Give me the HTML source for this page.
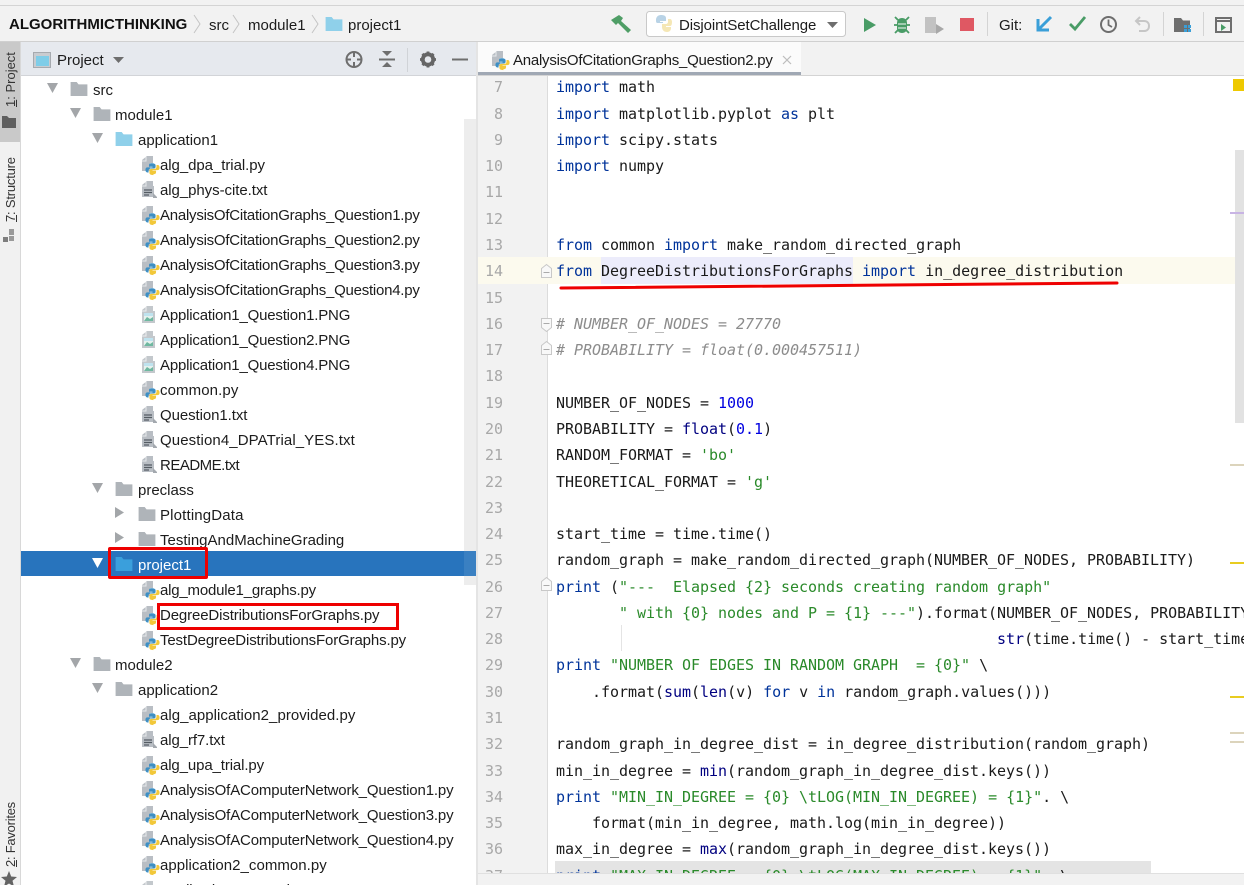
<!DOCTYPE html>
<html><head><meta charset="utf-8"><style>
html,body{margin:0;padding:0;background:#fff}
#p{position:relative;width:1244px;height:885px;overflow:hidden;background:#fff;font-family:"Liberation Sans",sans-serif;color:#1c1c1c}
.a{position:absolute}
.t{position:absolute;font-size:15px;line-height:20px;white-space:pre;height:20px;margin-top:2px}
.c{position:absolute;left:556px;font-family:"DejaVu Sans Mono",monospace;font-size:15px;line-height:20px;white-space:pre;letter-spacing:-.03px;color:#1a1a1a}
.n{position:absolute;left:480px;width:23px;text-align:right;font-family:"DejaVu Sans Mono",monospace;font-size:15px;line-height:20px;color:#a8a8a8}
.k{color:#00339a}.s{color:#2a8a2a}.d{color:#0000e0}.b{color:#000080}.m{color:#8c8c8c;font-style:italic}
svg{position:absolute;overflow:visible}
.v{position:absolute;font-size:13px;line-height:18px;white-space:pre;transform-origin:0 0;transform:rotate(-90deg);color:#333}
.q{letter-spacing:-.24px}.r{letter-spacing:-.15px}.w{letter-spacing:-.19px}
</style></head><body><div id="p">
<svg width="0" height="0" style="left:0;top:0"><defs>
<symbol id="py" viewBox="0 0 18 20" overflow="visible"><path d="M1 5l5-4h6v7H9v8H1z" fill="#b9bec4"/><path d="M5 2v4H1" fill="none" stroke="#e8eaec" stroke-width="1"/><g transform="translate(1.400 1.600) scale(.88)"><path d="M10.500 7.500c-2.500 0-3 1-3 2.500v1.500h4v.7H5.700C4 12.200 3.500 13.500 3.500 15s.5 3 2.200 3H7v-2c0-1.500 1-2.500 2.500-2.500H13c1.300 0 2-.8 2-2V10c0-1.500-1.500-2.500-4.500-2.500z" fill="#3d8fc4"/><path d="M12.500 20c2.500 0 3-1 3-2.500V16h-4v-.7h5.800c1.700 0 2.200-1.300 2.200-2.800s-.5-3-2.200-3H16v2c0 1.500-1 2.500-2.500 2.500H10c-1.300 0-2 .8-2 2v2.500c0 1.500 1.500 2.500 4.500 2.500z" fill="#f2c83a"/></g></symbol>
<symbol id="tx" viewBox="0 0 18 20" overflow="visible"><path d="M1 5l5-4h6v5h1v11H1z" fill="#b9bec4"/><path d="M5 2v4H1" fill="none" stroke="#e8eaec"/><path d="M3 10h8M3 12.500h8M3 15h5" stroke="#555c63" stroke-width="1.300"/><path d="M12 13l4 4v1h-4z" fill="#a4a9af"/></symbol>
<symbol id="pn" viewBox="0 0 18 20" overflow="visible"><path d="M1 5l5-4h6v5h2v12H1z" fill="#c3c8cc"/><path d="M5 2v4H1" fill="none" stroke="#eceeef"/><rect x="3" y="8" width="9" height="8" fill="#e6f2ee"/><path d="M3 16l3-4 3 2 3-2v4z" fill="#6fb8a0"/><rect x="3" y="8" width="9" height="3" fill="#bfe3ef"/></symbol>
<symbol id="fo" viewBox="0 0 18 15" overflow="visible"><path d="M0 0h6.500l2 2.500H18V15H0z"/></symbol>
</defs></svg>

<!-- top bars -->
<div class="a" style="left:0;top:0;width:1244px;height:41px;background:#f2f2f2"></div>
<div class="a" style="left:0;top:5px;width:1244px;height:1px;background:#d4d4d4"></div>
<div class="a" style="left:0;top:41px;width:1244px;height:1px;background:#d0d0d0"></div>
<div class="t" style="left:9px;top:13px;font-weight:bold;color:#111">ALGORITHMICTHINKING</div>
<svg style="left:0;top:0" width="400" height="41"><path d="M194 15l6 9-6 9M233 15l6 9-6 9M312 15l6 9-6 9" fill="none" stroke="#c4c4c4" stroke-width="1"/><use href="#fo" x="325" y="17" width="18" height="14" fill="#8fd0ea"/></svg>
<div class="t" style="left:209px;top:14px">src</div>
<div class="t" style="left:248px;top:14px">module1</div>
<div class="t" style="left:348px;top:14px">project1</div>

<!-- toolbar -->
<svg style="left:0;top:0" width="1244" height="41">
<path d="M611 20l8-5 4 3-2 3 10 9-3 3-10-10-2 2z" fill="#4f9e66"/>
<rect x="646.500" y="11.500" width="199" height="25" rx="3" fill="#fff" stroke="#c9c9c9"/>
<path d="M656 20c0-3 2-5 5-5s5 1 5 3v3h-6v1h3v1h-5c-2 0-2-1-2-3z" fill="#b9d3e6"/>
<path d="M672 22c0-2-1-3-2-3h-2v3c0 1-1 2-2 2h-4v3c0 3 2 5 5 5s4-2 4-4v-1h-5v-1h4c2 0 2-3 2-5z" fill="#f5e7b5"/>
<path d="M827 22h11l-5.500 6z" fill="#6e6e6e"/>
<path d="M864 18l12 7-12 7z" fill="#499c66"/>
<path d="M897 23c0-3 2-5 5-5s5 2 5 5v5c0 3-2 5-5 5s-5-2-5-5z" fill="#499c66"/><path d="M895 17l3 3M909 17l-3 3M894 25h3M907 25h3M895 33l3-3M909 33l-3-3" stroke="#499c66" stroke-width="1.800"/><path d="M898 24h8M898 28h8" stroke="#d5e9dc" stroke-width="1.300"/>
<path d="M925 17h11v16h-11z" fill="#c2c2c2"/><path d="M936 24l8 5-8 5z" fill="#a8a8a8"/>
<rect x="960" y="18" width="14" height="13" fill="#df5863"/>
<rect x="987" y="12" width="1" height="24" fill="#d4d4d4"/>
<path d="M1038 19v11h11M1039 29l12-12" fill="none" stroke="#3a9fd8" stroke-width="3"/>
<path d="M1070 24l5 5 10-12" fill="none" stroke="#499c66" stroke-width="2.800"/>
<circle cx="1108.500" cy="24.500" r="7.500" fill="none" stroke="#6e6e6e" stroke-width="2"/><path d="M1108.500 19.500v5.500l3.500 2" fill="none" stroke="#6e6e6e" stroke-width="1.800"/>
<path d="M1140 17l-4 4 4 4M1136 21h8c3 0 5 2 5 5s-2 5-5 5h-5" fill="none" stroke="#c6c6c6" stroke-width="2"/>
<rect x="1163" y="12" width="1" height="24" fill="#d4d4d4"/>
<path d="M1174 18h7l2 2.500h7V32h-16z" fill="#6e6e6e"/><g fill="#3a9fd8"><rect x="1184" y="25" width="3" height="3"/><rect x="1188" y="25" width="3" height="3"/><rect x="1184" y="29" width="3" height="3"/><rect x="1188" y="29" width="3" height="3"/></g>
<rect x="1203" y="12" width="1" height="24" fill="#d4d4d4"/>
<rect x="1216" y="18" width="15" height="14" fill="#f2f2f2" stroke="#6e6e6e" stroke-width="2"/><path d="M1216 21h15" stroke="#6e6e6e" stroke-width="2"/><path d="M1221 24l5 3.500-5 3.500z" fill="#499c66"/>
</svg>
<div class="t" style="left:679px;top:14px;letter-spacing:-.1px">DisjointSetChallenge</div>
<div class="t" style="left:999px;top:14px">Git:</div>

<!-- left stripe -->
<div class="a" style="left:0;top:42px;width:20px;height:843px;background:#f1f1f1;border-right:1px solid #d8d8d8"></div>
<div class="a" style="left:0;top:42px;width:20px;height:100px;background:#c9c9c9"></div>
<div class="v" style="left:2px;top:107px"><u>1</u>: Project</div>
<svg style="left:0;top:0" width="21" height="885"><path d="M2 116h5l2 2h7v10H2z" fill="#5e5e5e"/><rect x="9" y="236" width="5" height="5" fill="#9a9a9a"/><rect x="3" y="237" width="5" height="5" fill="#7e7e7e"/><rect x="9" y="229" width="5" height="6" fill="#9a9a9a"/><path d="M9 871l2.200 5.500 5.800.5-4.500 3.800 1.500 5.700-5-3-5 3 1.500-5.700L1 877l5.800-.5z" fill="#636363"/></svg>
<div class="v" style="left:2px;top:222px;letter-spacing:-.2px"><u>7</u>: Structure</div>
<div class="v" style="left:2px;top:867px;letter-spacing:-.25px"><u>2</u>: Favorites</div>

<!-- project header -->
<div class="a" style="left:21px;top:42px;width:456px;height:33px;background:#e6e9ee;border-bottom:1px solid #d2d4d8"></div>
<svg style="left:0;top:0" width="478" height="80">
<rect x="33.500" y="52.500" width="17" height="15" fill="#c9ccd0" stroke="#a6aaaf"/><rect x="36" y="56" width="13" height="10" fill="#7fcde8"/>
<path d="M113 57h11l-5.500 6z" fill="#6e6e6e"/>
<circle cx="354" cy="59.500" r="7.500" fill="none" stroke="#6e6e6e" stroke-width="2"/><path d="M346 59.500h5M357 59.500h5M354 52v5M354 62v5" stroke="#6e6e6e" stroke-width="2"/>
<path d="M379 59.500h16" stroke="#6e6e6e" stroke-width="2"/><path d="M382 51h10l-5 5zM382 67h10l-5-5z" fill="#6e6e6e"/>
<rect x="407" y="48" width="1" height="24" fill="#d0d3d7"/>
<circle cx="428" cy="59.500" r="5.200" fill="none" stroke="#666" stroke-width="3.800"/><path d="M428 51.500v3.500M428 64v3.500M420 59.500h3.500M432.500 59.500h3.500M422.400 53.900l2.400 2.400M431.200 62.700l2.400 2.400M433.600 53.900l-2.400 2.400M424.800 62.700l-2.400 2.400" stroke="#666" stroke-width="2.800"/>
<path d="M452 59.500h16" stroke="#6e6e6e" stroke-width="2"/>
</svg>
<div class="t" style="left:57px;top:49px">Project</div>

<!-- tree -->
<div class="a" style="left:464px;top:119px;width:12px;height:466px;background:#ededed"></div>
<div class="a" style="left:21px;top:551px;width:443px;height:25px;background:#2874bd"></div>
<div class="a" style="left:464px;top:551px;width:12px;height:25px;background:#3a80c2"></div>
<div class="a" style="left:476px;top:42px;width:2px;height:843px;background:#e4e4e4"></div>
<svg style="left:0;top:0" width="478" height="885">
<g fill="#a3a6a9"><path d="M47 83h11l-5.500 10zM70 108h11l-5.500 10zM92 133h11l-5.500 10zM92 483h11l-5.500 10zM70 658h11l-5.500 10zM92 683h11l-5.500 10z"/><path d="M115 507v11l9-5.500zM115 532v11l9-5.500z"/></g>
<path d="M92 558h11l-5.500 10z" fill="#fff"/>
<g fill="#afb4b9"><use href="#fo" x="70" y="82" width="18" height="14"/><use href="#fo" x="93" y="107" width="18" height="14"/><use href="#fo" x="115" y="482" width="18" height="14"/><use href="#fo" x="138" y="507" width="18" height="14"/><use href="#fo" x="138" y="532" width="18" height="14"/><use href="#fo" x="93" y="657" width="18" height="14"/><use href="#fo" x="115" y="682" width="18" height="14"/></g>
<use href="#fo" x="115" y="132" width="18" height="14" fill="#8fd0ea"/>
<use href="#fo" x="115" y="557" width="18" height="14" fill="#3a9fdc"/>
<use href="#py" x="141" y="155" width="18" height="20"/><use href="#tx" x="141" y="180" width="18" height="20"/>
<use href="#py" x="141" y="205" width="18" height="20"/><use href="#py" x="141" y="230" width="18" height="20"/><use href="#py" x="141" y="255" width="18" height="20"/><use href="#py" x="141" y="280" width="18" height="20"/>
<use href="#pn" x="141" y="305" width="18" height="20"/><use href="#pn" x="141" y="330" width="18" height="20"/><use href="#pn" x="141" y="355" width="18" height="20"/>
<use href="#py" x="141" y="380" width="18" height="20"/><use href="#tx" x="141" y="405" width="18" height="20"/><use href="#tx" x="141" y="430" width="18" height="20"/><use href="#tx" x="141" y="455" width="18" height="20"/>
<use href="#py" x="141" y="580" width="18" height="20"/><use href="#py" x="141" y="605" width="18" height="20"/><use href="#py" x="141" y="630" width="18" height="20"/>
<use href="#py" x="141" y="705" width="18" height="20"/><use href="#tx" x="141" y="730" width="18" height="20"/><use href="#py" x="141" y="755" width="18" height="20"/><use href="#py" x="141" y="780" width="18" height="20"/><use href="#py" x="141" y="805" width="18" height="20"/><use href="#py" x="141" y="830" width="18" height="20"/><use href="#py" x="141" y="855" width="18" height="20"/><use href="#pn" x="141" y="880" width="18" height="20"/>
</svg>
<div class="t" style="left:93px;top:79px">src</div>
<div class="t" style="left:115px;top:104px">module1</div>
<div class="t" style="left:138px;top:129px">application1</div>
<div class="t" style="left:160px;top:154px;letter-spacing:-.06px">alg_dpa_trial.py</div>
<div class="t" style="left:160px;top:179px;letter-spacing:-.06px">alg_phys-cite.txt</div>
<div class="t q" style="left:160px;top:204px">AnalysisOfCitationGraphs_Question1.py</div>
<div class="t q" style="left:160px;top:229px">AnalysisOfCitationGraphs_Question2.py</div>
<div class="t q" style="left:160px;top:254px">AnalysisOfCitationGraphs_Question3.py</div>
<div class="t q" style="left:160px;top:279px">AnalysisOfCitationGraphs_Question4.py</div>
<div class="t w" style="left:160px;top:304px">Application1_Question1.PNG</div>
<div class="t w" style="left:160px;top:329px">Application1_Question2.PNG</div>
<div class="t w" style="left:160px;top:354px">Application1_Question4.PNG</div>
<div class="t" style="left:160px;top:379px;letter-spacing:.1px">common.py</div>
<div class="t" style="left:160px;top:404px;letter-spacing:-.08px">Question1.txt</div>
<div class="t" style="left:160px;top:429px;letter-spacing:.1px">Question4_DPATrial_YES.txt</div>
<div class="t" style="left:160px;top:454px;letter-spacing:-.5px">README.txt</div>
<div class="t" style="left:138px;top:479px">preclass</div>
<div class="t" style="left:160px;top:504px;letter-spacing:.16px">PlottingData</div>
<div class="t" style="left:160px;top:529px">TestingAndMachineGrading</div>
<div class="t" style="left:138px;top:554px;color:#fff">project1</div>
<div class="t" style="left:160px;top:579px;letter-spacing:-.2px">alg_module1_graphs.py</div>
<div class="t" style="left:160px;top:604px;letter-spacing:-.13px">DegreeDistributionsForGraphs.py</div>
<div class="t" style="left:160px;top:629px;letter-spacing:-.14px">TestDegreeDistributionsForGraphs.py</div>
<div class="t" style="left:115px;top:654px">module2</div>
<div class="t" style="left:138px;top:679px">application2</div>
<div class="t" style="left:160px;top:704px;letter-spacing:.04px">alg_application2_provided.py</div>
<div class="t" style="left:160px;top:729px;letter-spacing:-.1px">alg_rf7.txt</div>
<div class="t" style="left:160px;top:754px;letter-spacing:-.12px">alg_upa_trial.py</div>
<div class="t r" style="left:160px;top:779px">AnalysisOfAComputerNetwork_Question1.py</div>
<div class="t r" style="left:160px;top:804px">AnalysisOfAComputerNetwork_Question3.py</div>
<div class="t r" style="left:160px;top:829px">AnalysisOfAComputerNetwork_Question4.py</div>
<div class="t" style="left:160px;top:854px;letter-spacing:.04px">application2_common.py</div>
<div class="t w" style="left:160px;top:879px">Application2_Question1.PNG</div>

<!-- red boxes -->
<div class="a" style="left:108px;top:547px;width:94px;height:26px;border:3px solid #ee0000;border-radius:2px"></div>
<div class="a" style="left:157px;top:603px;width:236px;height:21px;border:3px solid #ee0000"></div>

<!-- editor tabs -->
<div class="a" style="left:478px;top:42px;width:766px;height:33px;background:#f2f2f2"></div>
<div class="a" style="left:478px;top:42px;width:323px;height:33px;background:#fbfbfb"></div>
<div class="a" style="left:478px;top:72px;width:323px;height:3px;background:#a0a8b4"></div>
<div class="a" style="left:478px;top:75px;width:766px;height:1px;background:#d4d4d4"></div>
<svg style="left:0;top:0" width="900" height="80"><use href="#py" x="491" y="50" width="18" height="20"/><path d="M783 56l8 8M791 56l-8 8" stroke="#bdbdbd" stroke-width="1.200"/></svg>
<div class="t q" style="left:513px;top:49px">AnalysisOfCitationGraphs_Question2.py</div>

<!-- gutter -->
<div class="a" style="left:478px;top:76px;width:69px;height:797px;background:#f2f2f2"></div>
<div class="a" style="left:547px;top:76px;width:1px;height:797px;background:#dcdcdc"></div>
<div class="a" style="left:478px;top:257px;width:766px;height:27px;background:#fcfaee"></div>
<div class="a" style="left:601px;top:257px;width:252px;height:27px;background:#ececfb"></div>
<div class="a" style="left:555px;top:861px;width:596px;height:12px;background:#e4e4e4"></div>

<div class="n" style="top:77px">7</div><div class="n" style="top:104px">8</div><div class="n" style="top:130px">9</div><div class="n" style="top:156px">10</div><div class="n" style="top:182px">11</div><div class="n" style="top:209px">12</div><div class="n" style="top:235px">13</div><div class="n" style="top:261px">14</div><div class="n" style="top:288px">15</div><div class="n" style="top:314px">16</div><div class="n" style="top:340px">17</div><div class="n" style="top:366px">18</div><div class="n" style="top:393px">19</div><div class="n" style="top:419px">20</div><div class="n" style="top:445px">21</div><div class="n" style="top:472px">22</div><div class="n" style="top:498px">23</div><div class="n" style="top:524px">24</div><div class="n" style="top:550px">25</div><div class="n" style="top:577px">26</div><div class="n" style="top:603px">27</div><div class="n" style="top:629px">28</div><div class="n" style="top:655px">29</div><div class="n" style="top:682px">30</div><div class="n" style="top:708px">31</div><div class="n" style="top:734px">32</div><div class="n" style="top:761px">33</div><div class="n" style="top:787px">34</div><div class="n" style="top:813px">35</div><div class="n" style="top:839px">36</div><div class="n" style="top:866px">37</div>

<svg style="left:0;top:0" width="560" height="700"><g fill="#f8f8f8" stroke="#c8c8c8"><path d="M541.500 268.500l5-4 5 4v9h-10z"/><path d="M541.500 318.500h10v9l-5 4-5-4z"/><path d="M541.500 345.500l5-4 5 4v9h-10z"/><path d="M541.500 581.500l5-4 5 4v9h-10z"/></g><path d="M543.500 272.500h6M543.500 323.500h6M543.500 349.500h6M543.500 585.500h6" stroke="#aaa"/><path d="M621.500 625v26" stroke="#e4e4e4"/></svg>

<div class="c" style="top:77px"><span class="k">import</span> math</div>
<div class="c" style="top:104px"><span class="k">import</span> matplotlib.pyplot <span class="k">as</span> plt</div>
<div class="c" style="top:130px"><span class="k">import</span> scipy.stats</div>
<div class="c" style="top:156px"><span class="k">import</span> numpy</div>
<div class="c" style="top:235px"><span class="k">from</span> common <span class="k">import</span> make_random_directed_graph</div>
<div class="c" style="top:261px"><span class="k">from</span> DegreeDistributionsForGraphs <span class="k">import</span> in_degree_distribution</div>
<div class="c m" style="top:314px"># NUMBER_OF_NODES = 27770</div>
<div class="c m" style="top:340px"># PROBABILITY = float(0.000457511)</div>
<div class="c" style="top:393px">NUMBER_OF_NODES = <span class="d">1000</span></div>
<div class="c" style="top:419px">PROBABILITY = <span class="b">float</span>(<span class="d">0.1</span>)</div>
<div class="c" style="top:445px">RANDOM_FORMAT = <span class="s">'bo'</span></div>
<div class="c" style="top:472px">THEORETICAL_FORMAT = <span class="s">'g'</span></div>
<div class="c" style="top:524px">start_time = time.time()</div>
<div class="c" style="top:550px">random_graph = make_random_directed_graph(NUMBER_OF_NODES, PROBABILITY)</div>
<div class="c" style="top:577px"><span class="k">print</span> (<span class="s">"---  Elapsed {2} seconds creating random graph"</span></div>
<div class="c" style="top:603px">       <span class="s">" with {0} nodes and P = {1} ---"</span>).format(NUMBER_OF_NODES, PROBABILITY,</div>
<div class="c" style="top:629px">                                                 <span class="b">str</span>(time.time() - start_time))</div>
<div class="c" style="top:655px"><span class="k">print</span> <span class="s">"NUMBER OF EDGES IN RANDOM GRAPH  = {0}"</span> \</div>
<div class="c" style="top:682px">    .format(<span class="b">sum</span>(<span class="b">len</span>(v) <span class="k">for</span> v <span class="k">in</span> random_graph.values()))</div>
<div class="c" style="top:734px">random_graph_in_degree_dist = in_degree_distribution(random_graph)</div>
<div class="c" style="top:761px">min_in_degree = <span class="b">min</span>(random_graph_in_degree_dist.keys())</div>
<div class="c" style="top:787px"><span class="k">print</span> <span class="s">"MIN_IN_DEGREE = {0} \tLOG(MIN_IN_DEGREE) = {1}"</span>. \</div>
<div class="c" style="top:813px">    format(min_in_degree, math.log(min_in_degree))</div>
<div class="c" style="top:839px">max_in_degree = <span class="b">max</span>(random_graph_in_degree_dist.keys())</div>
<div class="c" style="top:866px"><span class="k">print</span> <span class="s">"MAX_IN_DEGREE = {0} \tLOG(MAX_IN_DEGREE) = {1}"</span>. \</div>

<!-- red underline -->
<svg style="left:0;top:0" width="1244" height="300"><path d="M561 288C700 286 900 286 1117 283" fill="none" stroke="#ee0000" stroke-width="3" stroke-linecap="round"/></svg>

<!-- markers -->
<div class="a" style="left:1235px;top:150px;width:9px;height:273px;background:#e2e2e2"></div>
<div class="a" style="left:1233px;top:79px;width:11px;height:12px;background:#eec900"></div>
<div class="a" style="left:1230px;top:212px;width:14px;height:2px;background:#c8b4e4"></div>
<div class="a" style="left:1230px;top:464px;width:14px;height:2px;background:#dcd4bc"></div>
<div class="a" style="left:1230px;top:562px;width:14px;height:2px;background:#e8cc20"></div>
<div class="a" style="left:1230px;top:696px;width:14px;height:2px;background:#e8cc20"></div>
<div class="a" style="left:1230px;top:732px;width:14px;height:2px;background:#dcd4bc"></div>
<div class="a" style="left:1230px;top:741px;width:14px;height:2px;background:#dcd4bc"></div>

<!-- bottom bar -->
<div class="a" style="left:478px;top:873px;width:766px;height:12px;background:#f2f2f2;border-top:1px solid #e0e0e0"></div>
</div></body></html>
